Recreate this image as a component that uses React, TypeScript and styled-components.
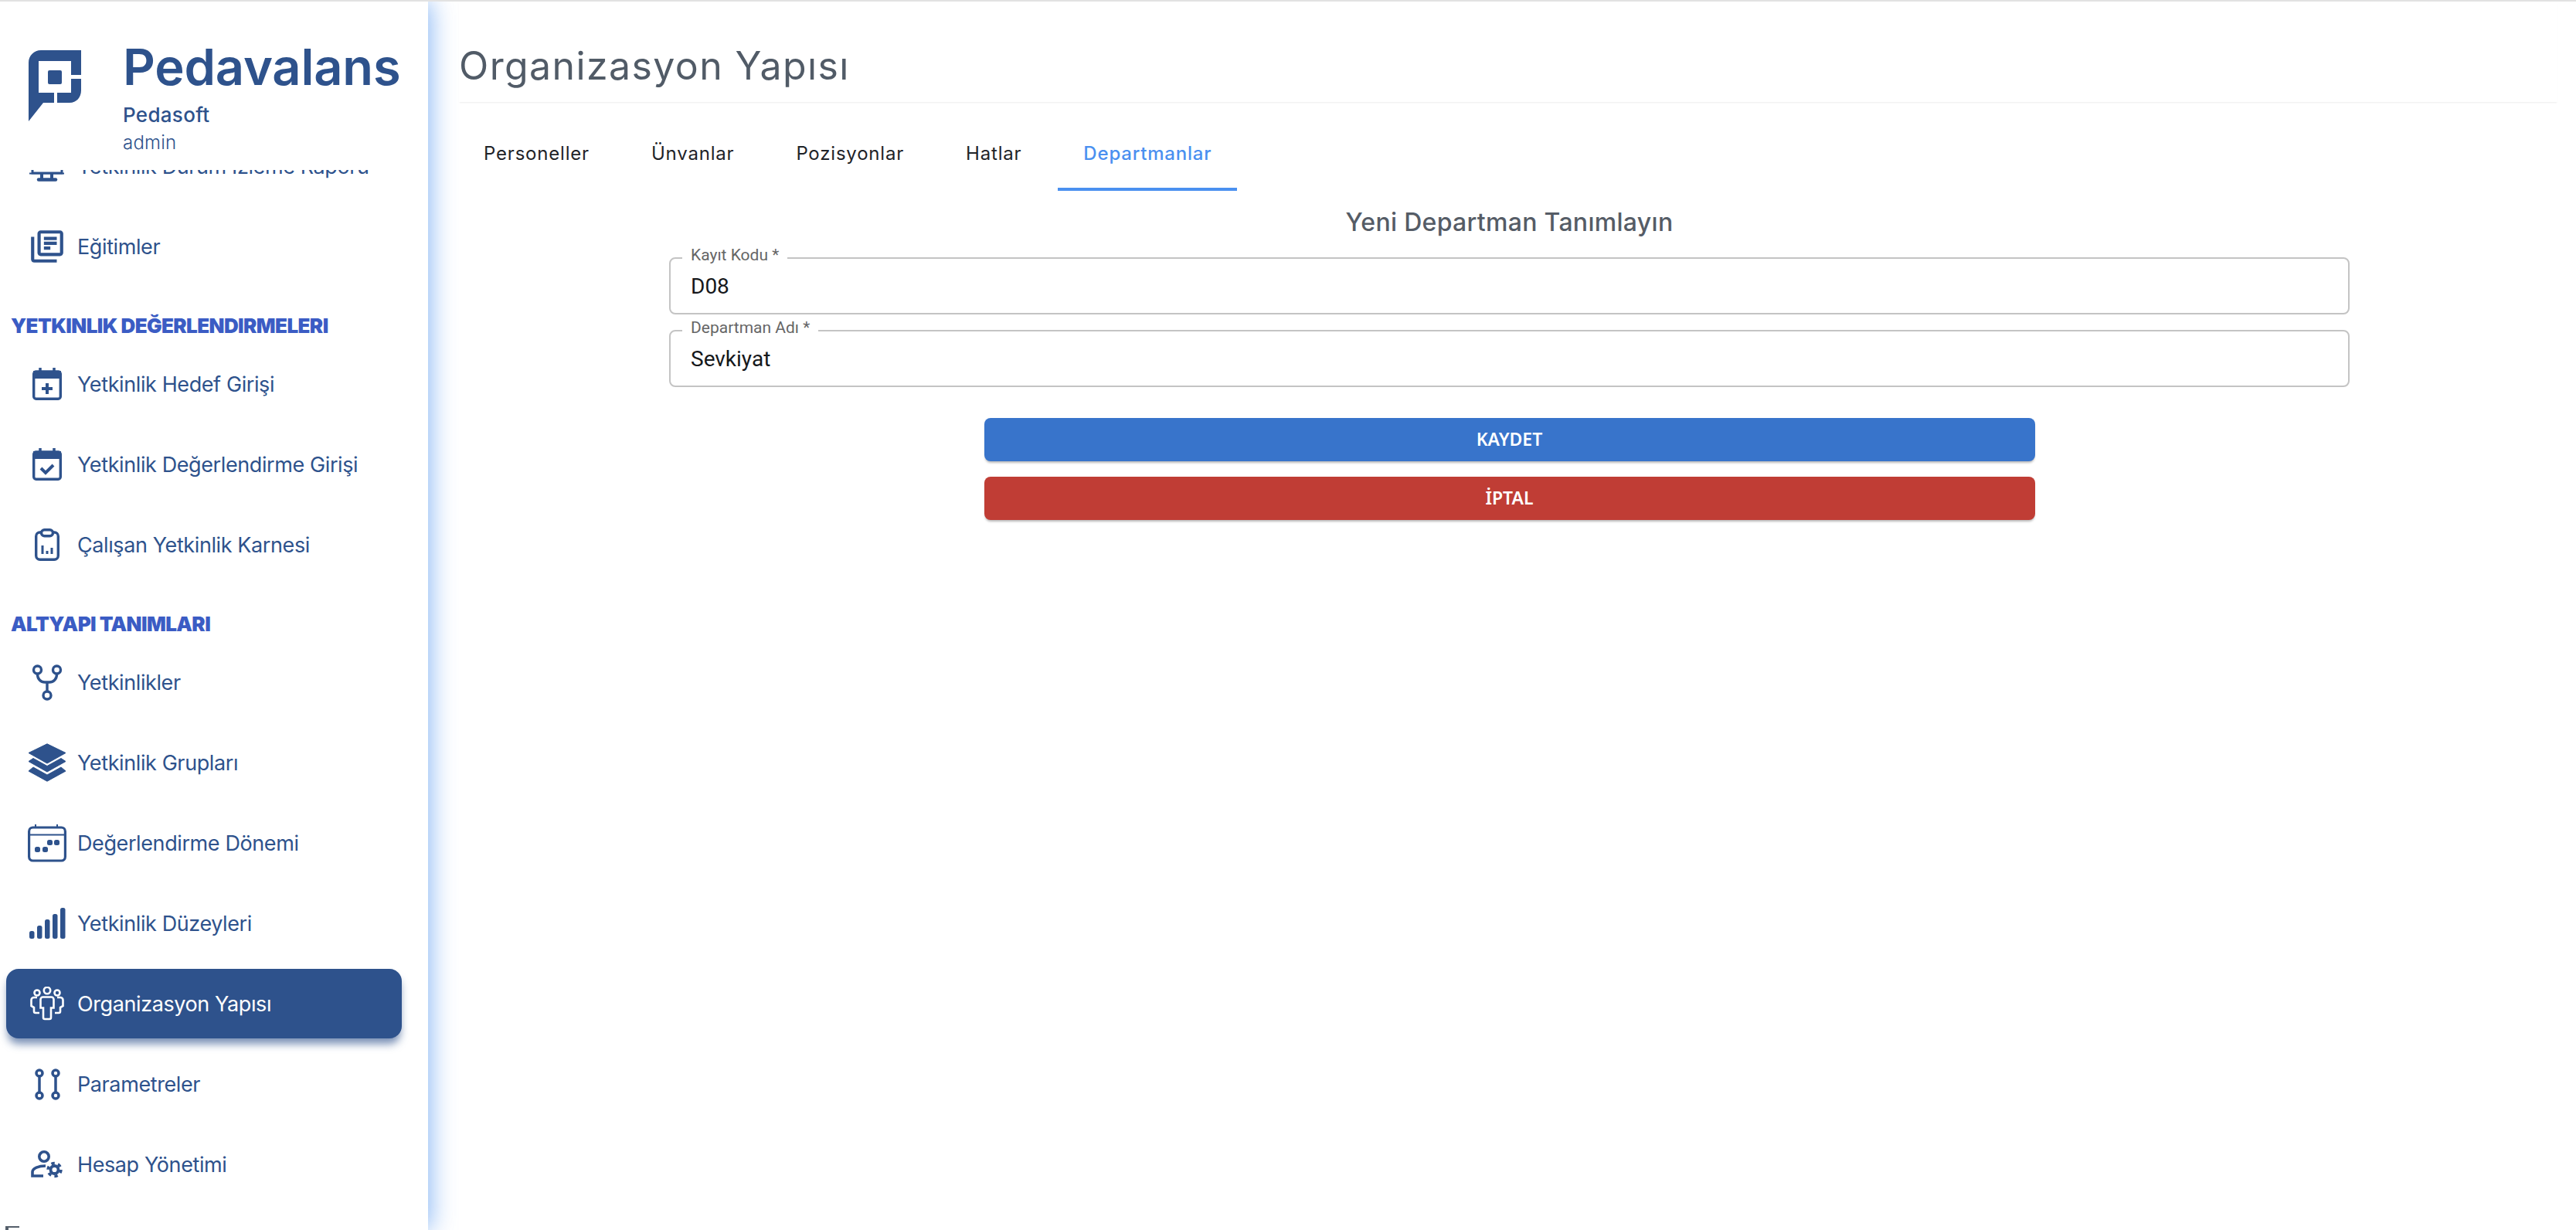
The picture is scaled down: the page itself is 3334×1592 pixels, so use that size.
import React from 'react'
import styled, { createGlobalStyle } from 'styled-components'
import { MdOutlineLibraryBooks } from 'react-icons/md'

const GlobalStyle = createGlobalStyle`
  html, body {
    margin: 0;
    padding: 0;
    background: #fff;
  }
  * {
    box-sizing: border-box;
  }
`

const Page = styled.div`
  position: relative;
  display: flex;
  width: 3334px;
  height: 1592px;
  overflow: hidden;
  border-top: 2px solid #e2e2e2;
  background: #fff;
`

const Sidebar = styled.aside`
  position: relative;
  z-index: 1;
  display: flex;
  flex-direction: column;
  flex: 0 0 554px;
  background: #fff;
  box-shadow: 3px 0 30px rgba(74, 144, 240, 0.65);
  clip-path: inset(0 -40px 0 0);
`

const Brand = styled.header`
  display: flex;
  flex: 0 0 218px;
  padding: 63px 0 0 37px;
  gap: 54px;
  color: #2e528c;
  font-family: Inter, sans-serif;
`

const BrandText = styled.div`
  display: flex;
  flex-direction: column;
  margin-top: -15px;
`

const BrandName = styled.div`
  font-size: 65px;
  font-weight: 600;
  line-height: 74px;
  letter-spacing: -0.2px;
`

const BrandOrg = styled.div`
  margin-top: 10px;
  font-size: 26px;
  font-weight: 500;
  line-height: 30px;
  letter-spacing: 0.3px;
`

const BrandUser = styled.div`
  margin-top: 7px;
  font-size: 24px;
  font-weight: 300;
  line-height: 28px;
  letter-spacing: 0.2px;
`

const Nav = styled.nav`
  flex: 1;
  overflow: hidden;
`

const NavScroll = styled.ul`
  display: flex;
  flex-direction: column;
  list-style: none;
  margin: -57px 0 0;
  padding: 0 0 0 8px;
`

const NavRow = styled.li<{ $active?: boolean }>`
  display: flex;
  flex: 0 0 90px;
  align-items: center;
  width: 512px;
  margin: 7px 0;
  padding-left: 20px;
  border-radius: 16px;
  color: ${(p) => (p.$active ? '#fff' : '#2e528c')};
  background: ${(p) => (p.$active ? '#2e528c' : 'transparent')};
  box-shadow: ${(p) => (p.$active ? '0 9px 11px -2px rgba(46, 82, 140, 0.65)' : 'none')};
  font-family: Inter, sans-serif;
  font-size: 27px;
  font-weight: 400;
  letter-spacing: -0.4px;
`

const IconSlot = styled.span`
  display: flex;
  align-items: center;
  justify-content: center;
  flex: 0 0 66px;
  margin-right: 6px;
`

const SectionTitle = styled.li`
  margin-left: 6px;
  padding: 40px 0 13px;
  color: #3b5cc4;
  font-family: Inter, sans-serif;
  font-size: 26px;
  font-weight: 900;
  line-height: 21px;
  letter-spacing: -0.6px;
  white-space: nowrap;
`

const CornerMark = styled.span`
  position: absolute;
  left: 7px;
  bottom: 0;
  width: 18px;
  height: 5px;
  border-top: 2px solid #555f6b;
  border-left: 4px solid #555f6b;
`

const Main = styled.main`
  display: flex;
  flex-direction: column;
  flex: 1;
  padding: 0 24px 0 40px;
`

const PageHeader = styled.div`
  height: 130px;
  padding: 52px 0 0;
  box-shadow: 0 2px 2px -1px rgba(0, 0, 0, 0.08);
`

const PageTitle = styled.h1`
  margin: 0;
  color: #515b67;
  font-family: Inter, sans-serif;
  font-size: 50px;
  font-weight: 400;
  line-height: 62px;
  letter-spacing: 1.4px;
`

const Tabs = styled.div`
  display: flex;
  gap: 14px;
  height: 94px;
  margin: 21px 0 0 -1px;
`

const Tab = styled.div<{ $active?: boolean }>`
  display: flex;
  align-items: center;
  justify-content: center;
  height: 94px;
  padding: 0 33px;
  border-bottom: 4px solid ${(p) => (p.$active ? '#4a90f0' : 'transparent')};
  color: ${(p) => (p.$active ? '#4a90f0' : '#1f2328')};
  font-family: Inter, sans-serif;
  font-size: 24px;
  font-weight: ${(p) => (p.$active ? 500 : 400)};
  letter-spacing: 0.8px;
`

const Form = styled.section`
  display: flex;
  flex-direction: column;
  align-items: center;
  padding: 0 269px 0 272px;
`

const FormTitle = styled.h2`
  margin: 16px 0 20px;
  color: #555c66;
  font-family: Inter, sans-serif;
  font-size: 32px;
  font-weight: 500;
  line-height: 50px;
  letter-spacing: 0.3px;
`

const Fields = styled.div`
  display: flex;
  flex-direction: column;
  gap: 20px;
  width: 100%;
`

const Field = styled.div`
  position: relative;
  height: 74px;
  border: 2px solid #c4c4c4;
  border-radius: 8px;
`

const FieldLabel = styled.label`
  position: absolute;
  left: 15px;
  top: -17px;
  padding: 0 11px;
  background: #fff;
  color: #666;
  font-family: Roboto, sans-serif;
  font-size: 21px;
  line-height: 24px;
`

const FieldInput = styled.input`
  width: 100%;
  height: 100%;
  padding: 0 26px;
  border: 0;
  outline: 0;
  background: transparent;
  color: #16181b;
  font-family: Roboto, sans-serif;
  font-size: 28px;
`

const Actions = styled.div`
  display: flex;
  flex-direction: column;
  gap: 20px;
  width: 1360px;
  margin-top: 40px;
`

const ActionButton = styled.button<{ $tone: 'primary' | 'danger' }>`
  height: 56px;
  padding: 0 0 3px;
  border: 0;
  border-radius: 8px;
  background: ${(p) => (p.$tone === 'primary' ? '#3874cb' : '#c03d35')};
  box-shadow: 0 3px 3px -1px rgba(0, 0, 0, 0.28);
  color: #fff;
  font-family: 'Noto Sans', sans-serif;
  font-size: 23px;
  font-weight: 600;
`

const LogoMark = () => (
  <svg width="68" height="92" viewBox="0 0 68 92" fill="none">
    <path
      d="M68 0H16C7 0 0 7 0 16V92L19 68H53C62 68 68 61 68 52V0Z"
      fill="#2e528c"
    />
    <rect x="13" y="14" width="42" height="41" fill="#fff" />
    <rect x="55" y="32" width="13" height="5" fill="#fff" />
    <rect x="33" y="55" width="4" height="14" fill="#fff" />
    <rect x="25" y="26" width="18" height="18" rx="2" fill="#2e528c" />
  </svg>
)

const MonitorIcon = () => (
  <svg width="50" height="50" viewBox="0 0 50 50" fill="none" stroke="currentColor">
    <rect x="6" y="8" width="38" height="26" strokeWidth="3" />
    <path d="M2 34.5H47" strokeWidth="2" />
    <path d="M18 34V42M31 34V42" strokeWidth="4" />
    <path d="M14 42.5H36" strokeWidth="4.5" strokeLinecap="round" />
  </svg>
)

const BooksIcon = () => <MdOutlineLibraryBooks size={50} />

const CalendarFrame = ({ children }: { children: React.ReactNode }) => (
  <svg width="38" height="42" viewBox="0 0 38 42" fill="none" stroke="currentColor">
    <rect x="1.7" y="5" width="34.6" height="35.3" rx="3" strokeWidth="3.4" />
    <path d="M2 5H36V13H2Z" fill="currentColor" strokeWidth="2" />
    <path d="M10 0V6M28 0V6" strokeWidth="3.5" />
    {children}
  </svg>
)

const CalendarPlusIcon = () => (
  <CalendarFrame>
    <path d="M19 20V34M12 27H26" strokeWidth="4" />
  </CalendarFrame>
)

const CalendarCheckIcon = () => (
  <CalendarFrame>
    <path d="M11 26L17 32L27 22" strokeWidth="4" />
  </CalendarFrame>
)

const ClipboardIcon = () => (
  <svg width="32" height="42" viewBox="0 0 32 42" fill="none" stroke="currentColor">
    <rect x="1.7" y="5" width="28.6" height="35.3" rx="5" strokeWidth="3.4" />
    <rect x="8.5" y="1.7" width="15" height="8" rx="4" fill="#fff" strokeWidth="3.4" />
    <path d="M10 22V33M16 29V33M22 25V33" strokeWidth="3" />
  </svg>
)

const ForkIcon = () => (
  <svg width="42" height="50" viewBox="0 0 42 50" fill="none" stroke="currentColor" strokeWidth="3.4">
    <circle cx="8.5" cy="9" r="5" />
    <circle cx="33.5" cy="9" r="5" />
    <circle cx="21" cy="42" r="5" />
    <path d="M8.5 14V15C8.5 21 13 25 18 25H24C29 25 33.5 21 33.5 15V14M21 25V37" />
  </svg>
)

const LayersIcon = () => (
  <svg width="50" height="50" viewBox="0 0 50 50" fill="currentColor" stroke="currentColor" strokeLinejoin="round">
    <path d="M25 0.8L49 12.5L25 26L1 12.5Z" />
    <path d="M7 19.5L25 29.5L43 19.5L49 23.5L25 37L1 23.5Z" />
    <path d="M7 31L25 41L43 31L49 36L25 49.2L1 36Z" />
  </svg>
)

const PeriodIcon = () => (
  <svg width="50" height="50" viewBox="0 0 50 50" fill="none" stroke="currentColor">
    <rect x="1.6" y="5" width="46.8" height="43" rx="5" strokeWidth="3.2" />
    <path d="M2 14.5H48" strokeWidth="2" />
    <path d="M10 1V5M38 1V5" strokeWidth="2" />
    <g fill="currentColor" stroke="none">
      <rect x="9" y="30" width="7" height="7" rx="2.5" />
      <rect x="19" y="30" width="7" height="7" rx="2.5" />
      <rect x="25" y="21" width="7" height="7" rx="2.5" />
      <rect x="34" y="21" width="7" height="7" rx="2.5" />
    </g>
  </svg>
)

const BarsIcon = () => (
  <svg width="47" height="40" viewBox="0 0 47 40" fill="currentColor">
    <rect x="0" y="30" width="6.5" height="10" rx="2.5" />
    <rect x="10" y="23" width="6.5" height="17" rx="2.5" />
    <rect x="20" y="15" width="6.5" height="25" rx="2.5" />
    <rect x="30" y="8" width="6.5" height="32" rx="2.5" />
    <rect x="40" y="0" width="6.5" height="40" rx="2.5" />
  </svg>
)

const PeopleIcon = () => (
  <svg width="44" height="44" viewBox="0 0 44 44" fill="none" stroke="currentColor" strokeWidth="2.6">
    <circle cx="9" cy="8" r="3.5" />
    <circle cx="22" cy="5" r="4.2" />
    <circle cx="35" cy="8" r="3.5" />
    <path d="M16.5 13.5H27.5A3 3 0 0 1 30.5 16.5V27.5H27V40A2 2 0 0 1 25 42H19A2 2 0 0 1 17 40V27.5H13.5V16.5A3 3 0 0 1 16.5 13.5Z" />
    <path d="M9 14H5A3.5 3.5 0 0 0 1.5 17.5V25L5 27V32A2 2 0 0 0 7 34H12" />
    <path d="M35 14H39A3.5 3.5 0 0 1 42.5 17.5V25L39 27V32A2 2 0 0 1 37 34H32" />
  </svg>
)

const ParamsIcon = () => (
  <svg width="33" height="41" viewBox="0 0 33 41" fill="none" stroke="currentColor" strokeWidth="3.5">
    <circle cx="6" cy="6" r="4" />
    <circle cx="27" cy="6" r="4" />
    <circle cx="6" cy="35" r="4" />
    <circle cx="27" cy="35" r="4" />
    <path d="M6 10V31M27 10V31" />
  </svg>
)

const AccountIcon = () => (
  <svg width="42" height="37" viewBox="0 0 42 37" fill="none" stroke="currentColor">
    <circle cx="17" cy="8" r="6.2" strokeWidth="3.6" />
    <path d="M19 20C10 20 2 23 2 28V33H16" strokeWidth="3.6" />
    <circle cx="30.5" cy="25" r="5" strokeWidth="3.8" />
    <circle cx="30.5" cy="25" r="8.4" strokeWidth="3.6" strokeDasharray="4.4 4.4" />
  </svg>
)

type NavEntry =
  | { kind: 'section'; label: string }
  | { kind: 'item'; label: string; icon: React.ReactNode; active?: boolean }

const navEntries: NavEntry[] = [
  { kind: 'item', label: 'Yetkinlik Durum İzleme Raporu', icon: <MonitorIcon /> },
  { kind: 'item', label: 'Eğitimler', icon: <BooksIcon /> },
  { kind: 'section', label: 'YETKINLIK DEĞERLENDIRMELERI' },
  { kind: 'item', label: 'Yetkinlik Hedef Girişi', icon: <CalendarPlusIcon /> },
  { kind: 'item', label: 'Yetkinlik Değerlendirme Girişi', icon: <CalendarCheckIcon /> },
  { kind: 'item', label: 'Çalışan Yetkinlik Karnesi', icon: <ClipboardIcon /> },
  { kind: 'section', label: 'ALTYAPI TANIMLARI' },
  { kind: 'item', label: 'Yetkinlikler', icon: <ForkIcon /> },
  { kind: 'item', label: 'Yetkinlik Grupları', icon: <LayersIcon /> },
  { kind: 'item', label: 'Değerlendirme Dönemi', icon: <PeriodIcon /> },
  { kind: 'item', label: 'Yetkinlik Düzeyleri', icon: <BarsIcon /> },
  { kind: 'item', label: 'Organizasyon Yapısı', icon: <PeopleIcon />, active: true },
  { kind: 'item', label: 'Parametreler', icon: <ParamsIcon /> },
  { kind: 'item', label: 'Hesap Yönetimi', icon: <AccountIcon /> },
]

const tabs = ['Personeller', 'Ünvanlar', 'Pozisyonlar', 'Hatlar', 'Departmanlar']

export default function App(): JSX.Element {
  return (
    <Page>
      <GlobalStyle />
      <Sidebar>
        <Brand>
          <LogoMark />
          <BrandText>
            <BrandName>Pedavalans</BrandName>
            <BrandOrg>Pedasoft</BrandOrg>
            <BrandUser>admin</BrandUser>
          </BrandText>
        </Brand>
        <Nav>
          <NavScroll>
            {navEntries.map((entry) =>
              entry.kind === 'section' ? (
                <SectionTitle key={entry.label}>{entry.label}</SectionTitle>
              ) : (
                <NavRow key={entry.label} $active={entry.active}>
                  <IconSlot>{entry.icon}</IconSlot>
                  {entry.label}
                </NavRow>
              ),
            )}
          </NavScroll>
        </Nav>
        <CornerMark />
      </Sidebar>
      <Main>
        <PageHeader>
          <PageTitle>Organizasyon Yapısı</PageTitle>
        </PageHeader>
        <Tabs>
          {tabs.map((tab) => (
            <Tab key={tab} $active={tab === 'Departmanlar'}>
              {tab}
            </Tab>
          ))}
        </Tabs>
        <Form>
          <FormTitle>Yeni Departman Tanımlayın</FormTitle>
          <Fields>
            <Field>
              <FieldLabel>Kayıt Kodu *</FieldLabel>
              <FieldInput readOnly value="D08" />
            </Field>
            <Field>
              <FieldLabel>Departman Adı *</FieldLabel>
              <FieldInput readOnly value="Sevkiyat" />
            </Field>
          </Fields>
          <Actions>
            <ActionButton $tone="primary">KAYDET</ActionButton>
            <ActionButton $tone="danger">İPTAL</ActionButton>
          </Actions>
        </Form>
      </Main>
    </Page>
  )
}
